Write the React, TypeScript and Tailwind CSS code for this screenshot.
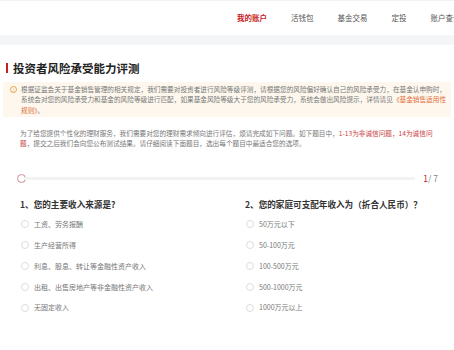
import React from 'react';

const navItems = ['我的账户', '活钱包', '基金交易', '定投', '账户查询'];

const q1 = ['工资、劳务报酬', '生产经营所得', '利息、股息、转让等金融性资产收入', '出租、出售房地产等非金融性资产收入', '无固定收入'];
const q2 = ['50万元以下', '50-100万元', '100-500万元', '500-1000万元', '1000万元以上'];

function Question({ title, options }: { title: string; options: string[] }) {
  return (
    <div>
      <div className="text-[8.6px] leading-[12px] font-semibold text-[#333]">{title}</div>
      <div className="mt-[9px] flex flex-col gap-[10.8px] pl-[1px]">
        {options.map((o) => (
          <label key={o} className="flex items-center gap-[5px] h-[10px]">
            <span className="w-[8px] h-[8px] rounded-full border border-[#ddd] shrink-0" />
            <span className="text-[7px] text-[#777]">{o}</span>
          </label>
        ))}
      </div>
    </div>
  );
}

export default function App() {
  return (
    <div className="w-[454px] h-[350px] overflow-hidden bg-white" style={{ fontFamily: '"Noto Sans CJK SC", "Noto Sans", sans-serif' }}>
      {/* top nav */}
      <div className="h-[35px] border-t border-[#f2f2f2] flex items-center pl-[237px] gap-[24px] whitespace-nowrap overflow-hidden text-[7.5px] text-[#555]">
        {navItems.map((n, i) => (
          <span key={n} className={i === 0 ? 'text-[#c81d25] font-bold' : ''}>{n}</span>
        ))}
      </div>
      <div className="h-[10px] bg-[#f4f5f7]" />

      {/* title */}
      <div className="mt-[16px] flex items-center gap-[5px] pl-[6px]">
        <span className="w-[2px] h-[10px] bg-[#c81d25]" />
        <h1 className="text-[11.5px] leading-[14px] font-bold text-[#222]">投资者风险承受能力评测</h1>
      </div>

      {/* notice */}
      <div className="mt-[7px] mx-[3px] bg-[#fdf7ee] pl-[7px] pr-[2px] py-[2px] flex gap-[4px] text-[6.65px] leading-[10.3px] text-[#777] whitespace-nowrap">
        <span className="mt-[1.5px] w-[7px] h-[7px] shrink-0 rounded-full border border-[#e7a34a] text-[#e7a34a] text-[5px] leading-[5px] flex items-center justify-center">!</span>
        <p>
          根据证监会关于基金销售管理的相关规定，我们需要对投资者进行风险等级评测，请根据您的风险偏好确认自己的风险承受力，在基金认申购时，<br />
          系统会对您的风险承受力和基金的风险等级进行匹配，如果基金风险等级大于您的风险承受力，系统会做出风险提示，详情请见<span className="text-[#e0703a]">《基金销售适用性<br />规则》</span>。
        </p>
      </div>

      {/* intro */}
      <p className="mt-[11px] pl-[20px] text-[6.65px] leading-[10.3px] text-[#777] whitespace-nowrap">
        为了给您提供个性化的理财服务，我们需要对您的理财需求倾向进行评估，烦请完成如下问题。如下题目中，<span className="text-[#c8403f]">1-13为非诚信问题，14为诚信问<br />题</span>，提交之后我们会向您公布测试结果。请仔细阅读下面题目，选出每个题目中最适合您的选项。
      </p>

      {/* progress */}
      <div className="mt-[25px] pl-[17px] pr-[16px] flex items-center h-[10px]">
        <span className="w-[9px] h-[9px] rounded-full border border-[#c98a94] bg-white shrink-0" />
        <div className="flex-1 h-[3px] bg-[#f2f2f2] ml-[-1px]" />
        <span className="ml-[8px] text-[8.5px] text-[#888]"><span className="text-[#c81d25]">1</span>/ 7</span>
      </div>

      {/* questions */}
      <div className="mt-[15px] grid grid-cols-[225px_1fr] pl-[20px]">
        <Question title="1、您的主要收入来源是?" options={q1} />
        <Question title="2、您的家庭可支配年收入为（折合人民币）？" options={q2} />
      </div>
    </div>
  );
}
